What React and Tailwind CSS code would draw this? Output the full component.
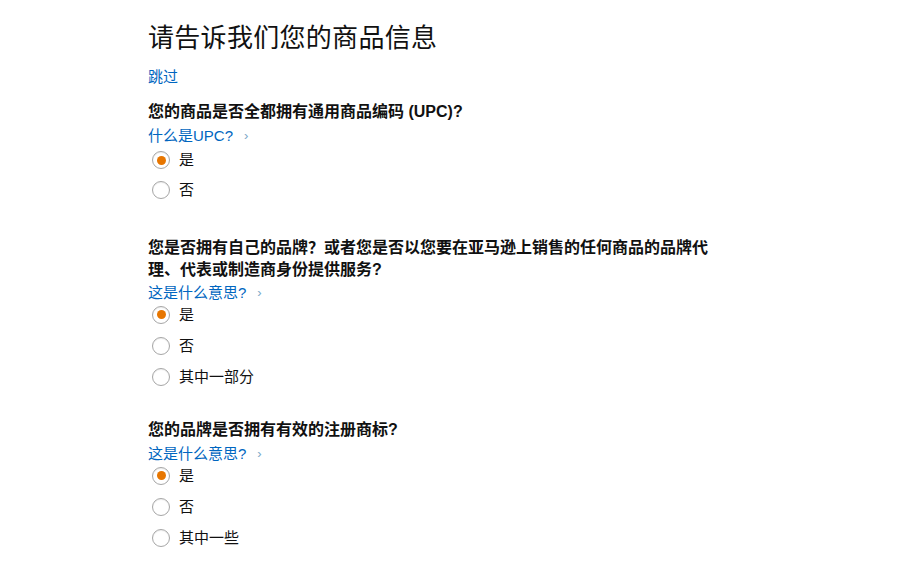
import React, { useState } from "react";

const font = { fontFamily: '"Liberation Sans", "Noto Sans CJK SC", sans-serif' };

function Radio({ label, checked, onChange, tall }) {
  return (
    <label className={`flex items-center cursor-pointer ${tall ? "h-[31px]" : "h-[30px]"}`}>
      <span className="w-[18px] h-[18px] ml-[4px] rounded-full border border-[#a6a6a6] bg-white flex items-center justify-center shadow-[inset_0_1px_1px_rgba(0,0,0,0.08)]">
        {checked && <span className="w-[9px] h-[9px] rounded-full bg-[#e77600]" />}
      </span>
      <input type="radio" className="hidden" checked={checked} onChange={onChange} />
      <span className="ml-[9px] text-[15px] leading-[20px] text-[#111]">{label}</span>
    </label>
  );
}

function HelpLink({ text }) {
  return (
    <a href="#" className="flex items-center text-[15px] leading-[18px] text-[#0066c0]">
      {text}
      <span className="ml-[11px] text-[13px] text-[#7aa7c7]">›</span>
    </a>
  );
}

function Question({ title, link, options, tall, className, linkGap = "mt-[4px]" }) {
  const [value, setValue] = useState(options[0]);
  return (
    <div className={className}>
      <h2 className="text-[16px] leading-[22px] font-bold text-[#111]">{title}</h2>
      <div className={linkGap}>
        <HelpLink text={link} />
      </div>
      <div className={tall ? "-mt-[3px]" : "mt-0"}>
        {options.map((o) => (
          <Radio key={o} label={o} tall={tall} checked={value === o} onChange={() => setValue(o)} />
        ))}
      </div>
    </div>
  );
}

export default function App() {
  return (
    <div className="min-h-screen bg-white" style={font}>
      <div className="pl-[148px] pt-[20px] w-[725px]">
        <h1 className="text-[26px] leading-[36px] font-normal text-[#111] tracking-[0.3px]">请告诉我们您的商品信息</h1>
        <a href="#" className="block mt-[11px] text-[15px] leading-[20px] text-[#0066c0]">跳过</a>

        <Question
          className="mt-[14px]"
          title="您的商品是否全都拥有通用商品编码 (UPC)?"
          link="什么是UPC?"
          options={["是", "否"]}
        />

        <Question
          className="mt-[32px]"
          linkGap="mt-[3px]"
          tall
          title="您是否拥有自己的品牌？或者您是否以您要在亚马逊上销售的任何商品的品牌代理、代表或制造商身份提供服务?"
          link="这是什么意思?"
          options={["是", "否", "其中一部分"]}
        />

        <Question
          className="mt-[27px]"
          tall
          title="您的品牌是否拥有有效的注册商标?"
          link="这是什么意思?"
          options={["是", "否", "其中一些"]}
        />
      </div>
    </div>
  );
}
